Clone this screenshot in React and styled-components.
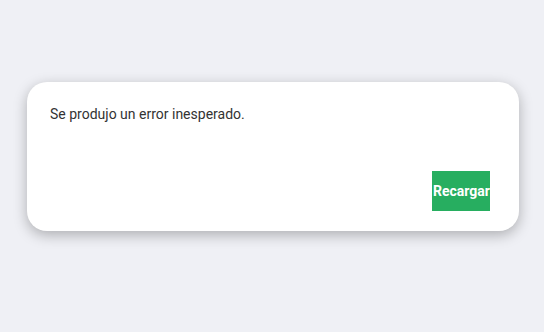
import React from "react";
import styled, { createGlobalStyle } from "styled-components";

const Global = createGlobalStyle`
  html, body {
    margin: 0;
    background: #eff0f5;
    font-family: Roboto, "Liberation Sans", sans-serif;
  }
`;

const Page = styled.div`
  display: flex;
  justify-content: center;
  padding: 82px 25px 0 27px;
  min-height: 332px;
  box-sizing: border-box;
`;

const Card = styled.div`
  width: 492px;
  height: 149px;
  box-sizing: border-box;
  background: #fff;
  border-radius: 20px;
  box-shadow: 0 4px 14px rgba(0, 0, 0, 0.28);
  padding: 22px 29px 20px 23px;
  display: flex;
  flex-direction: column;
  justify-content: space-between;
`;

const Message = styled.p`
  margin: 0;
  font-size: 14px;
  line-height: 20px;
  color: #333;
`;

const Actions = styled.div`
  display: flex;
  justify-content: flex-end;
`;

const Button = styled.button`
  width: 58px;
  height: 40px;
  padding: 0 0 0 1px;
  border: none;
  background: #27ae60;
  color: #fff;
  font-family: Roboto, "Liberation Sans", sans-serif;
  font-weight: bold;
  font-size: 14px;
  text-align: left;
  white-space: nowrap;
  overflow: hidden;
  cursor: pointer;
`;

export default function App() {
  return (
    <>
      <Global />
      <Page>
        <Card>
          <Message>Se produjo un error inesperado.</Message>
          <Actions>
            <Button onClick={() => window.location.reload()}>Recargar</Button>
          </Actions>
        </Card>
      </Page>
    </>
  );
}
